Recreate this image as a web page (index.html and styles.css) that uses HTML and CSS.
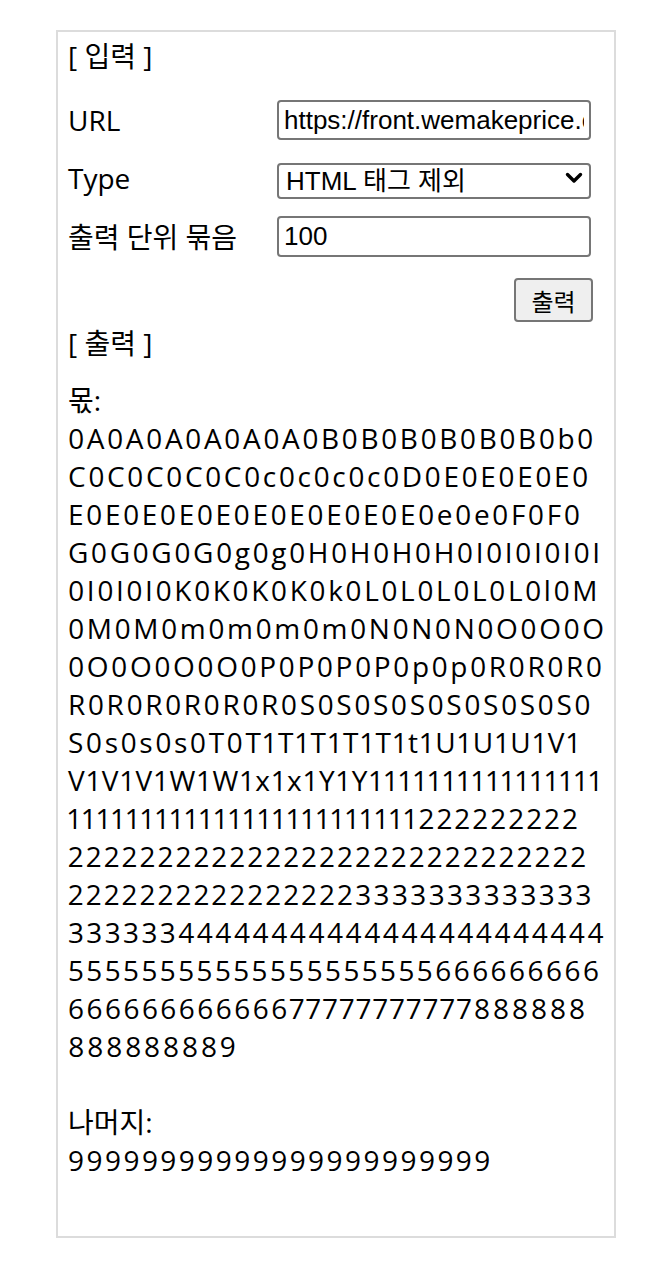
FILE: index.html
```html
<!DOCTYPE html>
<html lang="ko">
<head>
<meta charset="utf-8">
<title>입력 / 출력</title>
<link rel="stylesheet" href="styles.css">
</head>
<body>
<div class="panel">
  <div class="title">[ 입력 ]</div>
  <div class="form">
    <label class="label" for="url">URL</label>
    <input class="field field-tall" id="url" type="text" value="https://front.wemakeprice.com/main">
    <label class="label" for="type">Type</label>
    <div class="select-wrap">
      <select class="field field-select" id="type">
        <option>HTML 태그 제외</option>
        <option>TEXT 전체</option>
      </select>
      <svg class="chev" width="18" height="12" viewBox="0 0 18 12"><path d="M2.5 2.5 L9 9 L15.5 2.5" fill="none" stroke="#000" stroke-width="3.4" stroke-linecap="round" stroke-linejoin="round"/></svg>
    </div>
    <label class="label" for="unit">출력 단위 묶음</label>
    <input class="field field-tall field-unit" id="unit" type="text" value="100">
  </div>
  <div class="actions"><button class="btn" type="button">출력</button></div>
  <div class="title title-out">[ 출력 ]</div>
  <div class="result">
    <div class="line">몫:</div>
    <div class="line num">0A0A0A0A0A0A0B0B0B0B0B0B0b0</div>
    <div class="line num">C0C0C0C0C0c0c0c0c0D0E0E0E0E0</div>
    <div class="line num">E0E0E0E0E0E0E0E0E0E0e0e0F0F0</div>
    <div class="line num">G0G0G0G0g0g0H0H0H0H0I0I0I0I0I</div>
    <div class="line num">0I0I0I0K0K0K0K0k0L0L0L0L0L0l0M</div>
    <div class="line num">0M0M0m0m0m0m0N0N0N0O0O0O</div>
    <div class="line num">0O0O0O0O0P0P0P0P0p0p0R0R0R0</div>
    <div class="line num">R0R0R0R0R0R0S0S0S0S0S0S0S0S0</div>
    <div class="line num">S0s0s0s0T0T1T1T1T1T1t1U1U1U1V1</div>
    <div class="line num">V1V1V1W1W1x1x1Y1Y1111111111111111</div>
    <div class="line num">111111111111111111111111222222222</div>
    <div class="line num">22222222222222222222222222222</div>
    <div class="line num">22222222222222223333333333333</div>
    <div class="line num">33333344444444444444444444444</div>
    <div class="line num">55555555555555555555666666666</div>
    <div class="line num">66666666666677777777777888888</div>
    <div class="line num">888888889</div>
    <div class="line blank"></div>
    <div class="line">나머지:</div>
    <div class="line num">99999999999999999999999</div>
  </div>
</div>
</body>
</html>
```
FILE: styles.css
```css
html, body {
  margin: 0;
  padding: 0;
  background: #ffffff;
}
body {
  font-family: "Open Sans", "Noto Sans CJK KR", sans-serif;
  font-size: 28px;
  color: #000;
}
.panel {
  box-sizing: border-box;
  width: 560px;
  height: 1208px;
  margin: 30px 0 0 56px;
  border: 2px solid #dcdcdc;
  padding: 5px 10px 9px;
}
.title {
  line-height: 38px;
  height: 38px;
}
.form {
  display: grid;
  grid-template-columns: 209px 314px;
  grid-template-rows: 40px 36px 41px;
  row-gap: 20px;
  align-items: center;
  margin-top: 25px;
}
.label {
  line-height: 38px;
}
.field {
  box-sizing: border-box;
  width: 314px;
  margin: 0;
  font-family: "Liberation Sans", "Noto Sans CJK KR", sans-serif;
  font-size: 26px;
  color: #000;
  background: #fff;
  border: 2px solid #767676;
  border-radius: 4px;
  outline: none;
}
.field-tall {
  height: 40px;
  padding: 0 5px;
}
.field-unit {
  height: 41px;
}
.select-wrap {
  position: relative;
  width: 314px;
  height: 36px;
}
.field-select {
  height: 36px;
  padding: 0 34px 0 7px;
  -webkit-appearance: none;
  appearance: none;
}
.chev {
  position: absolute;
  right: 8px;
  top: 12px;
  pointer-events: none;
}
.actions {
  display: flex;
  justify-content: flex-end;
  width: 525px;
  margin-top: 21px;
}
.btn {
  box-sizing: border-box;
  width: 79px;
  height: 44px;
  margin: 0;
  padding: 0;
  font-family: "Noto Sans CJK KR", sans-serif;
  font-size: 24px;
  color: #000;
  background: #efefef;
  border: 2px solid #767676;
  border-radius: 4px;
}
.title-out {
  margin-top: 2px;
}
.result {
  margin-top: 19px;
}
.line {
  line-height: 38px;
  height: 38px;
  white-space: nowrap;
}
.num {
  letter-spacing: 2.5px;
  font-variant-numeric: proportional-nums;
}
```
